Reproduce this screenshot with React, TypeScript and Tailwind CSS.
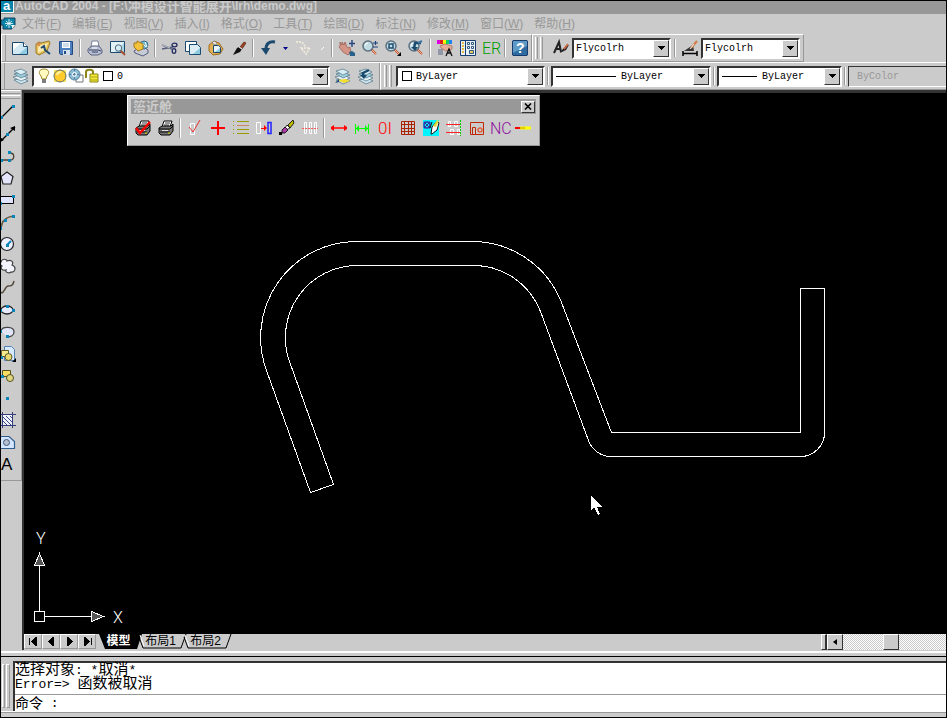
import React from 'react';
import type { ReactNode } from 'react';

const NAVY = '#1b4a6e';

function Icon({ children }: { children: ReactNode }) {
  return (
    <svg width="16" height="16" viewBox="0 0 16 16" fill="none" className="shrink-0 overflow-visible" aria-hidden="true">
      {children}
    </svg>
  );
}

const printer = (
  <>
    <path d="M4 7 5 1h6l1 6z" fill="#fff" stroke="#777f9c" />
    <path d="M1 9l4-3h7l3 4v3l-4 2H4l-3-3z" fill="#b9bfd0" stroke="#5a6384" />
    <path d="M2 10h9l3 1M5 12h6" stroke="#39456b" />
    <path d="M5 8h5" stroke="#fff" />
  </>
);

const lens = (
  <>
    <path d="M9 9l5 5" stroke="#c2512c" strokeWidth="2" />
    <path d="M9 9l5 5" stroke="#e9b08c" strokeWidth="1" />
    <circle cx="6" cy="6" r="5" fill="#c2dce4" stroke="#5c7080" strokeWidth="1.5" />
    <path d="M3 6a3 3 0 0 1 3-3" stroke="#fff" />
  </>
);

const page = (
  <>
    <path d="M.5 2.500h11l4 4v8H.5z" fill="#fff" stroke={NAVY} />
    <path d="M1 14V10l8-7h2l4 4v7z" fill="#d2e8f3" />
    <path d="M7 14l8-7v7z" fill="#8fcbe0" />
    <path d="M11.500 2.500v4h4" stroke={NAVY} fill="#fff" />
  </>
);

const sheets = (
  <>
    <path d="M1 12l8-2 6 3-7 3z" fill="#cfe6ee" stroke="#4f7387" strokeWidth=".7" />
    <path d="M0 9l8-2 7 3-7 3z" fill="#e8f4f8" stroke="#4f7387" strokeWidth=".7" />
    <path d="M1 6l7-2 7 3-7 3z" fill="#9fcfde" stroke="#4f7387" strokeWidth=".7" />
    <path d="M1 3l7-2 6 3-6 3z" fill="#d8eef4" stroke="#4f7387" strokeWidth=".7" />
  </>
);

const blackPrinter = (
  <>
    <path d="M4 7l2-6h8l-2 6z" fill="#fff" stroke="#000" />
    <path d="M7 3h5M6 5h5" stroke="#000" strokeWidth=".8" />
    <path d="M1 8l3-2h9l2-2v7l-3 4H3l-2-2z" fill="#777" stroke="#000" />
    <path d="M1 9h11l3-3M2 12h10" stroke="#000" />
    <path d="M4 10.500h6" stroke="#ddd" />
    <path d="M10 13h2" stroke="#dddd00" />
  </>
);

const standardGroups: { label: string; icon: ReactNode }[][] = [
  [
    { label: '新建', icon: page },
    {
      label: '打开',
      icon: (
        <>
          <path d="M1 4l3-2 2 1 8-2 1 2-3 8-8 4-3-2z" fill="#e4c255" stroke="#9c7a28" />
          <path d="M3 6l10-3-3 7-7 3z" fill="#f8eab2" />
          <path d="M6 8l3-2 1 4 5 4" stroke={NAVY} strokeWidth="2" />
          <path d="M1 3h5l-2 4z" fill="#d98b50" />
        </>
      ),
    },
    {
      label: '保存',
      icon: (
        <>
          <path d="M1.500 1.500h13v13h-12l-1-1z" fill="#4c7fbd" stroke="#234a85" />
          <path d="M4 2h8v6H4z" fill="#fff" />
          <path d="M5 4h6M5 6h6" stroke="#9db6d3" />
          <path d="M5 10h7v5H5z" fill="#d5dfe9" />
          <path d="M6 11h2v3H6z" fill="#234a85" />
        </>
      ),
    },
  ],
  [
    { label: '打印', icon: printer },
    {
      label: '打印预览',
      icon: (
        <>
          <path d="M.5 1.500h14v11H.5z" fill="#e2f1f6" stroke={NAVY} />
          <path d="M5 12l9-9v9z" fill="#a8d6e4" />
          <path d="M10 10l5 5" stroke="#a85236" strokeWidth="2" />
          <circle cx="8.500" cy="8" r="3.200" fill="#d7edf4" stroke="#52697e" />
        </>
      ),
    },
    {
      label: '发布',
      icon: (
        <>
          <path d="M1 11l5-3h6l3 2v3l-5 3-8-3z" fill="#c7cbd8" stroke="#555d7d" />
          <circle cx="11" cy="5" r="4" fill="#67b4d1" stroke="#41708a" />
          <path d="M9 3l4 4M12 2l2 5" stroke="#fff" />
          <path d="M1 3h3V1l6 3v5l-5 2-4-4z" fill="#f2c23c" stroke="#a37718" />
        </>
      ),
    },
  ],
  [
    {
      label: '剪切',
      icon: (
        <>
          <path d="M0 5l10 4M0 9l11-2" stroke="#566078" strokeWidth="1.500" />
          <path d="M0 5l8 3" stroke="#e8ebf0" strokeWidth=".7" />
          <ellipse cx="12.500" cy="5" rx="2.500" ry="1.800" stroke="#232d63" strokeWidth="1.300" />
          <ellipse cx="12" cy="11" rx="1.800" ry="2.300" stroke="#232d63" strokeWidth="1.300" />
        </>
      ),
    },
    {
      label: '复制',
      icon: (
        <>
          <path d="M.5 1.500h11v10H.5z" fill="#fff" stroke={NAVY} />
          <path d="M4.500 4.500h8l3 3v7h-11z" fill="#dceef5" stroke={NAVY} />
          <path d="M8 14l7-6v6z" fill="#8fcbe0" />
        </>
      ),
    },
    {
      label: '粘贴',
      icon: (
        <>
          <path d="M1 5l5-4 5 2 4 6-3 5-7 1-4-4z" fill="#dfae55" stroke="#a06d1c" />
          <path d="M4 3l2-2 3 2-1 2z" fill="#eee" stroke="#777" strokeWidth=".7" />
          <path d="M5.500 5.500h5l2 2v5h-7z" fill="#e8f5fa" stroke={NAVY} />
          <path d="M7 12l5-4v4z" fill="#8fcbe0" />
        </>
      ),
    },
    {
      label: '特性匹配',
      icon: (
        <>
          <path d="M9 7l4-5 2 1-4 6z" fill="#9b4426" stroke="#55200f" strokeWidth=".7" />
          <path d="M6 8l2-1 3 2-2 3-7 3z" fill="#111" />
          <path d="M8 7l3 2" stroke="#ddd" strokeWidth="1.200" />
        </>
      ),
    },
  ],
];

const viewGroups: { label: string; icon: ReactNode }[][] = [
  [
    {
      label: '实时平移',
      icon: (
        <>
          <path d="M1 2l2 3V2l2 3 1-3 2 5 1 1 2-1 1 5-3 3-5-3-4-5 1-1z" fill="#d49486" stroke="#96574c" strokeWidth=".7" />
          <path d="M10 12l3-1 3 2v3h-5z" fill="#28618a" />
          <path d="M13 0v7M10 3.500h6" stroke="#27457e" strokeWidth="1.400" />
        </>
      ),
    },
    {
      label: '实时缩放',
      icon: (
        <>
          {lens}
          <path d="M11 3h5M13.500 1v4M11 7h5" stroke="#1c447d" strokeWidth="1.200" />
        </>
      ),
    },
    {
      label: '窗口缩放',
      icon: (
        <>
          {lens}
          <path d="M4 4h4v4H4z" stroke={NAVY} strokeWidth="1.500" />
          <path d="M16 12v4h-4z" fill="#000" />
        </>
      ),
    },
    {
      label: '缩放上一个',
      icon: (
        <>
          {lens}
          <path d="M6 9l1-6h6" stroke={NAVY} strokeWidth="2.500" />
          <path d="M3 7h7L7 11z" fill={NAVY} />
          <path d="M10 3l4-2" stroke="#4177a3" strokeWidth="2" />
        </>
      ),
    },
  ],
  [
    {
      label: '特性',
      icon: (
        <>
          <path d="M0 0h4v4H0z" fill="#e000e0" />
          <path d="M3 0h3v4H3z" fill="#e02020" />
          <path d="M6 0h3v4H6z" fill="#f5f500" />
          <path d="M9 0h3v4H9z" fill="#10d060" />
          <path d="M12 0h3v4h-3z" fill="#2080f0" />
          <path d="M3 6l5-2 7 2v3l-6 2-5-3z" fill="#e8ad99" stroke="#a16352" strokeWidth=".7" />
          <path d="M1 10h5M1 12h5M1 14h5" stroke="#5b6682" strokeWidth="1.200" />
          <path d="M9 16l3-7 3 7M10 13h4" stroke="#111" strokeWidth="1.300" />
        </>
      ),
    },
    {
      label: '设计中心',
      icon: (
        <>
          <path d="M.5.5h15v15H.5z" fill="#e8f1f7" stroke="#173d70" />
          <path d="M5.500 1v14" stroke="#173d70" />
          <path d="M3 2v12" stroke="#e5bb41" strokeWidth="2" strokeDasharray="2 1" />
          <path d="M7.500 2.500h2v2h-2zM11.500 2.500h2v2h-2zM7.500 6.500h2v2h-2zM11.500 6.500h2v2h-2z" fill="#fff" stroke="#31577f" />
          <path d="M9.500 10.500h4v3h-4z" fill="#ebcf62" stroke="#31577f" />
        </>
      ),
    },
    {
      label: 'ER',
      icon: (
        <text x="-1" y="14" fontSize="16" fontWeight="300" fontFamily="Roboto, sans-serif" fill="#009c00">
          ER
        </text>
      ),
    },
  ],
  [
    {
      label: '帮助',
      icon: (
        <>
          <path d="M1 .5h14l.5.5v14l-.5.5H1l-.5-.5V1z" fill="#2d6ba1" stroke="#173d70" />
          <path d="M1 1h14v5L1 13z" fill="#5f9bc5" />
          <text x="4" y="13" fontSize="14" fontWeight="700" fontFamily="Liberation Sans, sans-serif" fill="#fff">
            ?
          </text>
        </>
      ),
    },
  ],
];

const pluginGroups: { label: string; icon: ReactNode }[][] = [
  [
    {
      label: '打印检查',
      icon: (
        <>
          {blackPrinter}
          <path d="M1 8l4 5L15 2" stroke="#f00" strokeWidth="2.500" />
        </>
      ),
    },
    { label: '打印', icon: blackPrinter },
  ],
  [
    {
      label: '检查',
      icon: (
        <>
          <path d="M3.500 3.500h4v11h-4z" stroke="#fff" />
          <path d="M2 7l4 5 7-12" stroke="#e83030" />
        </>
      ),
    },
    { label: '添加', icon: <path d="M8 1v14M1 8h14" stroke="#f00" strokeWidth="2" /> },
    {
      label: '列表',
      icon: (
        <>
          <path d="M4 1.500h12M4 9.500h12M4 13.500h12" stroke="#999900" />
          <path d="M4 5.500h12" stroke="#cc8866" />
          <path d="M.5 1v14" stroke="#999900" strokeDasharray="1 3" />
        </>
      ),
    },
    {
      label: '移动',
      icon: (
        <>
          <path d="M.5 2.500h4v11h-4z" stroke="#fff" />
          <path d="M12 2.500h3v11h-3z" stroke="#2222ff" strokeWidth="1.500" />
          <path d="M5 8h3V5l3 3-3 3V9H5z" fill="#f00" />
        </>
      ),
    },
    {
      label: '清除',
      icon: (
        <>
          <path d="M0 12h3v3H0z" fill="#000" />
          <path d="M9 5l5-5 1 3-4 5z" fill="#bcbc00" stroke="#000" strokeWidth=".8" />
          <path d="M8 5l3 3-4 2-1-2z" fill="#fff" stroke="#000" strokeWidth=".8" />
          <path d="M3 10l3-3 3 3-3 3H3z" fill="#a83ba8" stroke="#000" strokeWidth=".8" />
        </>
      ),
    },
    {
      label: '折弯',
      icon: (
        <>
          <path d="M2.500 2.500h2v11h-2zM7.500 2.500h2v11h-2zM12.500 2.500h2v11h-2z" stroke="#fff" />
          <path d="M0 8.500h16" stroke="#f55" strokeDasharray="2 1" />
        </>
      ),
    },
  ],
  [
    {
      label: '长度',
      icon: (
        <>
          <path d="M1 8h14" stroke="#f33" strokeWidth="2" />
          <path d="M0 7l3-2v6L0 9zM16 7l-3-2v6l3-2z" fill="#f00" />
        </>
      ),
    },
    {
      label: '标注',
      icon: (
        <>
          <path d="M1.500 4v10M14.500 4v10M2 8.500h12" stroke="#0f0" />
          <path d="M5 5L2 8.500 5 12zM11 5l3 3.500-3 3.500z" fill="#0f0" />
        </>
      ),
    },
    {
      label: 'OI',
      icon: (
        <text x="1" y="14" fontSize="17" fontWeight="300" fontFamily="Roboto, sans-serif" fill="#f00">
          0I
        </text>
      ),
    },
    {
      label: '网格',
      icon: <path d="M1.500 1.500h13v13h-13zM1 4.500h14M1 8.500h14M1 11.500h14M4.500 1v14M8.500 1v14M11.500 1v14" stroke="#aa2200" />,
    },
    {
      label: '编辑',
      icon: (
        <>
          <path d="M0 0h16v16H0z" fill="#00f5ff" />
          <path d="M1 2h6v6H1zM1 2l6 6M7 2L1 8" stroke="#3430a8" />
          <circle cx="4" cy="5" r="3" stroke="#3430a8" />
          <path d="M8 14l1-7 5-6 2 2-2 7-5 4z" fill="#fff" stroke="#111" />
          <path d="M10 6l4-6 2 1-3 6z" fill="#dddd44" />
          <path d="M7 8l2-6" stroke="#111" />
        </>
      ),
    },
    {
      label: '排样',
      icon: (
        <>
          <path d="M2.500 1.500h2v5h-2zM8.500 1.500h3v5h-3zM4.500 9.500h3v5h-3zM11.500 9.500h2v5h-2z" stroke="#fff" />
          <path d="M0 4.500h15M0 12.500h15" stroke="#f22" />
          <path d="M14.500 0v16" stroke="#0c0" strokeDasharray="2 1" />
        </>
      ),
    },
    {
      label: '模具',
      icon: (
        <>
          <path d="M1.500 2.500h13v12h-13z" stroke="#c02800" />
          <path d="M3.500 14V7.500h3V14" stroke="#c02800" />
          <circle cx="11" cy="10" r="2" stroke="#e06040" strokeWidth="1.500" />
        </>
      ),
    },
    {
      label: 'NC',
      icon: (
        <text x="-2" y="14" fontSize="16" fontWeight="300" fontFamily="Roboto, sans-serif" fill="#8f109f">
          NC
        </text>
      ),
    },
    {
      label: '线段',
      icon: (
        <>
          <path d="M0 8h6" stroke="#f00" strokeWidth="2" />
          <path d="M5 8h11" stroke="#ff0" strokeWidth="3" />
          <path d="M5 8h5" stroke="#d09000" />
        </>
      ),
    },
  ],
];

const node = '#0784b8';

const drawTools: { label: string; icon: ReactNode }[] = [
  {
    label: '直线',
    icon: (
      <>
        <path d="M2 13L13 2" stroke="#000" strokeWidth="1.300" />
        <path d="M0 12h3v3H0zM12 1h3v3h-3z" fill={node} />
      </>
    ),
  },
  {
    label: '构造线',
    icon: (
      <>
        <path d="M1 15L15 1" stroke="#000" strokeWidth="1.300" />
        <path d="M15 0v5l-5-3zM0 11l4 3-4 2z" fill="#000" />
        <path d="M6 7h3v3H6z" fill={node} />
      </>
    ),
  },
  {
    label: '多段线',
    icon: (
      <>
        <path d="M1 12h9c5 0 5-7 0-7" stroke="#4a4134" strokeWidth="1.300" />
        <path d="M0 11h3v3H0zM8 11h3v3H8zM8 3h3v3H8z" fill={node} />
      </>
    ),
  },
  { label: '正多边形', icon: <path d="M7 2l6 4.500L11 14H3L1 6.500z" fill="#e4e4fa" stroke="#222" strokeWidth="1.200" /> },
  {
    label: '矩形',
    icon: (
      <>
        <path d="M.5 4.500h13v7H.5z" fill="#e0e4ff" stroke="#000" />
        <path d="M12 3h3v3h-3zM0 10h2v3H0z" fill={node} />
      </>
    ),
  },
  {
    label: '圆弧',
    icon: (
      <>
        <path d="M1 14Q2 3 14 2" stroke="#665d47" strokeWidth="1.500" />
        <path d="M12 1h3v3h-3zM4 5h3v3H4zM0 13h2v3H0z" fill={node} />
      </>
    ),
  },
  {
    label: '圆',
    icon: (
      <>
        <circle cx="7" cy="8" r="6.500" fill="#edf0ff" stroke="#222" strokeWidth="1.200" />
        <path d="M7 9l4-4" stroke={node} strokeWidth="2" />
        <path d="M6 8h3v3H6z" fill={node} />
      </>
    ),
  },
  {
    label: '修订云线',
    icon: <path d="M1 4c1-4 6-3 6-1 4-2 7 1 5 4 5 2 3 8-1 7-2 2-6 0-5-2-4 1-6-2-4-4-2-1-2-3-1-4z" fill="#f4f4ff" stroke="#444" strokeWidth="1.200" />,
  },
  { label: '样条曲线', icon: <path d="M0 11c3 6 5-5 8-5s5 0 6-5" stroke="#53493b" strokeWidth="1.500" /> },
  {
    label: '椭圆',
    icon: (
      <>
        <ellipse cx="7" cy="8" rx="6" ry="4" fill="#e5eaff" stroke="#222" strokeWidth="1.300" />
        <path d="M0 7h2v3H0zM12 7h3v3h-3zM6 3h3v3H6z" fill={node} />
      </>
    ),
  },
  {
    label: '椭圆弧',
    icon: (
      <>
        <path d="M1 7c1-5 13-5 13 1 0 3-3 5-7 5" fill="#dfe4f6" stroke="#444" strokeWidth="1.300" />
        <path d="M0 6h2v3H0zM6 11h3v3H6z" fill={node} />
      </>
    ),
  },
  {
    label: '插入块',
    icon: (
      <>
        <path d="M4.500.5h7l3 3v11h-10z" fill="#d8e8ff" stroke="#5582b5" />
        <path d="M1.500 4.500h7v6h-7z" fill="#f4e98b" stroke="#5c5728" />
        <circle cx="8.500" cy="11" r="3.500" fill="#e5d96f" stroke="#5c5728" />
        <path d="M16 12v4h-4z" fill="#000" />
        <path d="M0 10h3v3H0z" fill={node} />
      </>
    ),
  },
  {
    label: '创建块',
    icon: (
      <>
        <path d="M2.500 2.500h8v6h-8z" fill="#f8dd63" stroke="#55511f" />
        <circle cx="10" cy="10" r="3.500" fill="#e0d680" stroke="#55511f" />
        <path d="M1 7h3v3H1z" fill={node} />
      </>
    ),
  },
  { label: '点', icon: <path d="M6 7h3v3H6z" fill={node} /> },
  {
    label: '图案填充',
    icon: (
      <>
        <path d="M3 3h10v10H3z" fill="#f3f4ff" />
        <path d="M3 5l8 8M3 9l4 4M6 4l7 7M10 4l3 3" stroke="#394687" />
        <path d="M2.500 0v16M12.500 0v16M0 2.500h16M0 13.500h16" stroke="#323c76" />
      </>
    ),
  },
  {
    label: '面域',
    icon: (
      <>
        <path d="M0 2.500h9l5.500 5v7H0z" fill="#d4e6ff" stroke="#315c8e" strokeWidth="1.200" />
        <circle cx="6.500" cy="8.500" r="3" fill="#b5bfcf" stroke="#3f5879" />
      </>
    ),
  },
  {
    label: '多行文字',
    icon: (
      <text x="1" y="14" fontSize="17" fontFamily="Liberation Sans, sans-serif" fill="#000">
        A
      </text>
    ),
  },
];

const menus = [
  ['文件', 'F'],
  ['编辑', 'E'],
  ['视图', 'V'],
  ['插入', 'I'],
  ['格式', 'O'],
  ['工具', 'T'],
  ['绘图', 'D'],
  ['标注', 'N'],
  ['修改', 'M'],
  ['窗口', 'W'],
  ['帮助', 'H'],
];

function ToolButton({ label, children }: { label: string; children: ReactNode }) {
  return (
    <button type="button" aria-label={label} className="flex h-[22px] w-[23px] shrink-0 items-center justify-center">
      <Icon>{children}</Icon>
    </button>
  );
}

function Separator() {
  return (
    <div className="flex w-[6px] shrink-0 justify-center self-stretch py-1">
      <div className="w-[2px] border-l border-[#989898] bg-white" />
    </div>
  );
}

function Grip() {
  return (
    <div className="flex shrink-0 gap-[2px] self-stretch py-[2px]">
      <div className="w-[3px] border-l border-r border-l-white border-r-[#989898]" />
      <div className="w-[3px] border-l border-r border-l-white border-r-[#989898]" />
    </div>
  );
}

function ButtonGroups({ groups }: { groups: { label: string; icon: ReactNode }[][] }) {
  return (
    <>
      {groups.map((group, i) => (
        <React.Fragment key={i}>
          {i > 0 && <Separator />}
          {group.map((tool) => (
            <ToolButton key={tool.label} label={tool.label}>
              {tool.icon}
            </ToolButton>
          ))}
        </React.Fragment>
      ))}
    </>
  );
}

function Combo({ label, value, width, children }: { label: string; value: string; width: string; children?: ReactNode }) {
  return (
    <div
      className={`relative flex h-[21px] shrink-0 items-center border-2 border-t-[#333] border-l-[#333] border-r-white border-b-white bg-white ${width}`}
    >
      {children}
      <select
        aria-label={label}
        className="h-full min-w-0 flex-1 appearance-none bg-transparent pt-[1px] pl-[2px] font-['Liberation_Mono',monospace] text-[10px] text-black outline-none"
      >
        <option>{value}</option>
      </select>
      <span className="pointer-events-none flex h-[17px] w-4 shrink-0 items-center justify-center border border-t-white border-l-white border-r-[#333] border-b-[#333] bg-[#cbcbcb]">
        <svg width="7" height="4" viewBox="0 0 7 4" shapeRendering="crispEdges">
          <path d="M0 0h7L3.500 4z" fill="#000" />
        </svg>
      </span>
    </div>
  );
}

function PluginToolbar() {
  return (
    <section className="absolute top-[2px] left-[103px] border border-t-white border-l-white border-r-[#989898] border-b-[#989898] bg-[#cbcbcb] p-[3px]">
      <header className="flex h-[15px] items-center justify-between bg-[#989898] pr-[1px] pl-[2px]">
        <h2 className="text-[13px] leading-[15px] font-bold text-[#cbcbcb]">箈近舱</h2>
        <button
          type="button"
          aria-label="关闭"
          className="flex h-3 w-[14px] items-center justify-center border border-t-white border-l-white border-r-[#333] border-b-[#333] bg-[#cbcbcb]"
        >
          <svg width="8" height="7" viewBox="0 0 8 7">
            <path d="M1 0.500l6 6M7 0.500l-6 6" stroke="#000" strokeWidth="1.600" />
          </svg>
        </button>
      </header>
      <div className="flex h-[28px] items-center pr-[2px]">
        <ButtonGroups groups={pluginGroups} />
      </div>
    </section>
  );
}

function Drawing() {
  return (
    <svg className="absolute inset-0 h-full w-full" shapeRendering="crispEdges" aria-label="图形">
      <g transform="translate(-23.500 -92.500)" fill="none" stroke="#fff">
        <path d="M310 492L266 370A96 96 0 0 1 356 241H472A96 96 0 0 1 561 302L611 432H800V288H824V432A24 24 0 0 1 800 456H611A24 24 0 0 1 588 440L540 311A72 72 0 0 0 472 265H356A72 72 0 0 0 289 361L333 484Z" />
        <path d="M590.500 494.500v15l3-3 4 8 2-1-3-7h5z" fill="#fff" stroke="none" />
      </g>
    </svg>
  );
}

function UcsIcon() {
  return (
    <svg width="120" height="110" className="absolute bottom-0 left-0" shapeRendering="crispEdges" aria-label="UCS">
      <g fill="none" stroke="#fff">
        <path d="M10.500 87.500h10v10h-10zM15.500 87V39M21 92.500h47" />
        <path d="M10.500 41.500l5-12 5 12zM67.500 87.500l12 5-12 5z" fill="#555" />
      </g>
      <g fill="#fff" fontSize="16" fontWeight="300" fontFamily="Roboto, sans-serif">
        <text x="12" y="20">
          Y
        </text>
        <text x="89" y="99">
          X
        </text>
      </g>
    </svg>
  );
}

function LayoutBar() {
  const arrows = ['M4 3v8M12 2v10L6 7z', 'M11 2v10L5 7z', 'M6 2v10l6-5z', 'M5 2v10l6-5zM13 3v8'];
  return (
    <div className="flex h-4 shrink-0 bg-[#cbcbcb] text-[12px] leading-[15px]">
      {arrows.map((d, i) => (
        <button
          key={d}
          type="button"
          aria-label={['第一个', '上一个', '下一个', '最后一个'][i]}
          className="flex h-[15px] w-[18px] items-center border border-t-white border-l-white border-r-[#989898] border-b-[#989898]"
        >
          <svg width="16" height="13" viewBox="0 0 16 14" shapeRendering="crispEdges">
            <path d={d} fill="#000" stroke="#000" strokeWidth="1" />
          </svg>
        </button>
      ))}
      <div className="flex pl-[3px]">
        <button type="button" className="relative h-[15px] w-[39px] font-bold text-white">
          <svg width="46" height="15" className="absolute top-0 left-0">
            <path d="M0 0h43l-5 15H6z" fill="#000" />
          </svg>
          <span className="relative">模型</span>
        </button>
        {['布局1', '布局2'].map((name) => (
          <button key={name} type="button" className="relative h-[15px] w-[45px]">
            <svg width="52" height="15" className="absolute top-0 left-0" fill="none" stroke="#000">
              <path d="M1 3l4 11h38l5-14" />
              <path d="M2 1l4 11" stroke="#fff" />
            </svg>
            <span className="relative">{name}</span>
          </button>
        ))}
      </div>
      <div className="flex-1" />
      <div className="w-[6px] border border-r-2 border-t-white border-l-white border-r-[#333] border-b-[#333]" />
      <button
        type="button"
        aria-label="向左滚动"
        className="flex w-4 items-center justify-center border border-t-white border-l-white border-r-[#333] border-b-[#333]"
      >
        <svg width="4" height="6" viewBox="0 0 4 6">
          <path d="M4 0v6L0 3z" fill="#000" />
        </svg>
      </button>
      <div className="w-[103px] bg-[repeating-conic-gradient(#cbcbcb_0_25%,#fff_0_50%)] bg-[length:2px_2px] pl-10">
        <div className="h-4 w-4 border border-t-white border-l-white border-r-[#333] border-b-[#333] bg-[#cbcbcb]" />
      </div>
    </div>
  );
}

function CommandWindow() {
  return (
    <section className="flex h-[50px] shrink-0 pl-[1px]">
      <div className="flex w-[11px] gap-[1px] pt-[3px] pb-[3px]">
        <div className="w-[3px] border border-t-white border-l-white border-r-[#989898] border-b-[#989898]" />
        <div className="w-[4px] border border-t-white border-l-white border-r-[#989898] border-b-[#989898]" />
      </div>
      <div className="flex flex-1 flex-col border-t-2 border-l-2 border-[#333] bg-white font-['Liberation_Mono','Noto_Sans_CJK_SC',monospace] text-[13px] text-black">
        <div className="h-8 border-b border-[#989898] pt-[1px] leading-[14px]">
          <p className="flex h-[14px] whitespace-pre">
            <span className="text-[15px]">选择对象</span>: *<span className="text-[15px]">取消</span>*
          </p>
          <p className="flex h-[14px] whitespace-pre">
            Error=&gt; <span className="text-[15px]">函数被取消</span>
          </p>
        </div>
        <div className="flex h-4 items-center pt-[1px] leading-4">
          <label htmlFor="command" className="flex whitespace-pre">
            <span className="text-[14px]">命令</span> :
          </label>
          <input id="command" className="h-4 min-w-0 flex-1 bg-transparent pl-2 outline-none" />
        </div>
      </div>
    </section>
  );
}

export default function App() {
  return (
    <div className="flex h-screen flex-col overflow-hidden border border-black bg-[#cbcbcb] font-['Liberation_Sans','Noto_Sans_CJK_SC',sans-serif] text-black">
      <header className="flex h-[13px] shrink-0 items-center bg-[#989898]">
        <svg width="14" height="13" viewBox="0 0 14 13" className="shrink-0 overflow-visible" aria-hidden="true">
          <path d="M0 0h12v11H0z" fill="#0784a8" />
          <text x="2" y="9" fontSize="13" fontWeight="700" fontFamily="Liberation Sans, sans-serif" fill="#fff">
            a
          </text>
          <path d="M12.500 0v11.500H0" stroke="#fff" fill="none" />
        </svg>
        <h1 className="flex h-[13px] text-[12px] leading-[11px] font-bold whitespace-pre text-[#cbcbcb]">
          AutoCAD 2004 - [F:\<span className="text-[13px]">冲模设计智能展开</span>\lrh\demo.dwg]
        </h1>
      </header>

      <nav className="flex h-5 shrink-0 items-center gap-[11px]">
        <svg width="16" height="16" viewBox="0 0 16 16" className="-mr-[6px] shrink-0" aria-hidden="true">
          <path d="M0 4h3V2h11v7l-3 4H2V9H0z" fill="#0784a8" stroke="#17425e" />
          <path d="M8 3v9M4 7.500h8M5 5l6 5M11 5l-6 5" stroke="#fff" strokeWidth=".8" />
          <path d="M14 9l-3 4V9z" fill="#fff" />
        </svg>
        {menus.map(([name, key]) => (
          <button key={key} type="button" className="text-[12px] leading-4 whitespace-nowrap text-[#989898]">
            {name}(<u>{key}</u>)
          </button>
        ))}
      </nav>

      <div className="flex h-7 shrink-0">
        <div className="flex items-center border border-t-white border-l-white border-r-[#989898] border-b-[#989898]">
          <div className="mr-[2px] w-[4px] self-stretch border-r border-[#989898]" />
          <ButtonGroups groups={standardGroups} />
          <Separator />
          <ToolButton label="放弃">
            <path d="M15 2C9 1 6 4 6 9" stroke={NAVY} strokeWidth="3" />
            <path d="M1 8h9l-4 7z" fill={NAVY} />
          </ToolButton>
          <button type="button" aria-label="放弃列表" className="flex w-3 items-center justify-center">
            <svg width="5" height="3">
              <path d="M0 0h5L2.500 3z" fill="#00008b" />
            </svg>
          </button>
          <ToolButton label="重做">
            <path d="M1 2c6-1 9 2 9 6M6 8h9l-4 6z" stroke="#f5efdc" strokeWidth="1.500" strokeDasharray="2 1" />
          </ToolButton>
          <button type="button" aria-label="重做列表" className="flex w-[15px] items-center justify-center">
            <svg width="4" height="3">
              <path d="M1 3l3-3" stroke="#fff" />
            </svg>
          </button>
          <Separator />
          <ButtonGroups groups={viewGroups} />
        </div>
        <div className="flex items-center border border-t-white border-l-white border-r-[#989898] border-b-[#989898] pr-[3px] pl-[2px]">
          <Grip />
          <div className="w-[6px]" />
          <ToolButton label="文字样式">
            <path d="M1 13L6 2l2 10M3 9h5" stroke="#222" strokeWidth="2" />
            <path d="M8 11l5-5 3-1-3 5-6 3z" fill="#222" />
            <path d="M11 9l4-5" stroke="#c9683f" strokeWidth="2" />
          </ToolButton>
          <Combo label="文字样式控制" value="Flycolrh" width="w-[99px]" />
          <div className="w-[1px]" />
          <Separator />
          <ToolButton label="标注样式">
            <path d="M1 11v5M15 11v5M1 13.500h14" stroke="#000" strokeWidth="1.500" />
            <path d="M2 11l9-6 1 6z" fill="#333" />
            <path d="M9 8l6-7" stroke="#d37b45" strokeWidth="2" />
            <path d="M8 9l4-5" stroke="#eee" />
          </ToolButton>
          <Combo label="标注样式控制" value="Flycolrh" width="w-[99px]" />
        </div>
      </div>

      <div className="flex h-7 shrink-0 border-t border-white">
        <div className="flex items-center border-r border-b border-[#989898] pr-[2px]">
          <div className="mr-[4px] w-[4px] self-stretch border-r border-[#989898]" />
          <ToolButton label="图层特性管理器">{sheets}</ToolButton>
          <Combo label="图层" value="0" width="w-[298px]">
            <span className="flex items-center pl-[2px]">
              <Icon>
                <path d="M8 1c5 0 6 4 3 7l-1 3H6L5 8C2 5 3 1 8 1z" fill="#fffbc0" stroke="#a48a2e" />
                <path d="M6 12h4M6 14h4" stroke="#555" strokeWidth="1.500" />
              </Icon>
              <Icon>
                <path d="M2 2h12v12H2z" fill="#f4e75c" />
                <circle cx="8" cy="8" r="6" fill="#ffcb2d" stroke="#63706b" />
                <path d="M5 7a4 4 0 0 1 4-3" stroke="#fff2a0" strokeWidth="2" />
              </Icon>
              <Icon>
                <path d="M8 7h7v7H8z" fill="#fff" stroke="#777" />
                <circle cx="6.500" cy="6.500" r="5.500" fill="#8fbcd5" stroke="#527d9b" />
                <circle cx="6.500" cy="6.500" r="2" stroke="#fff" />
                <path d="M6.500 1v11M1 6.500h11" stroke="#527d9b" strokeDasharray="2 2" />
              </Icon>
              <Icon>
                <path d="M2 10V4c0-3 7-3 7 0v3" stroke="#8b8615" strokeWidth="2" />
                <path d="M6 6h8v8H6z" fill="#f2ea35" stroke="#8b8615" />
                <path d="M7 9h7M7 12h7" stroke="#aaa31d" />
              </Icon>
              <span className="mr-[2px] ml-[3px] h-[10px] w-[10px] border border-black" />
            </span>
          </Combo>
          <div className="w-[1px]" />
          <ToolButton label="将对象的图层置为当前">
            {sheets}
            <path d="M2 12l9-1 4 2-6 2z" fill="#f4dd2f" />
            <path d="M0 15l4-4v3z" fill="#174a80" />
          </ToolButton>
          <ToolButton label="上一个图层">
            {sheets}
            <path d="M5 8V5l6-3" stroke={NAVY} strokeWidth="2.500" />
            <path d="M2 7h7l-3 4z" fill={NAVY} />
          </ToolButton>
        </div>
        <div className="flex min-w-0 flex-1 items-center border-b border-l border-b-[#989898] border-l-white pl-[3px]">
          <Grip />
          <div className="w-[4px] shrink-0" />
          <Combo label="颜色" value="ByLayer" width="w-[149px]">
            <span className="mr-[2px] ml-[4px] h-[10px] w-[10px] shrink-0 border border-black" />
          </Combo>
          <Separator />
          <Combo label="线型" value="ByLayer" width="w-[160px]">
            <span className="mx-[3px] h-px w-[60px] shrink-0 bg-black" />
          </Combo>
          <Separator />
          <Combo label="线宽" value="ByLayer" width="w-[125px]">
            <span className="mx-[3px] h-px w-[35px] shrink-0 bg-black" />
          </Combo>
          <Separator />
          <select
            aria-label="打印样式"
            disabled
            className="h-[21px] min-w-0 flex-1 appearance-none border border-t-[#333] border-r-0 border-b-white border-l-[#333] bg-[#cbcbcb] pl-2 font-['Liberation_Mono',monospace] text-[10px] text-[#989898] opacity-100"
          >
            <option>ByColor</option>
          </select>
        </div>
      </div>

      <main className="flex min-h-0 flex-1">
        <aside className="w-[21px] shrink-0">
          <div className="-ml-[1px] border-r border-b border-[#989898] pb-[5px]">
            <div className="flex flex-col gap-[1px] pb-[2px]">
              <div className="h-[4px] border border-x-transparent border-t-white border-b-[#989898]" />
              <div className="h-[4px] border border-x-transparent border-t-white border-b-[#989898]" />
            </div>
            {drawTools.map((tool) => (
              <button key={tool.label} type="button" aria-label={tool.label} className="flex h-[22px] items-center">
                <Icon>{tool.icon}</Icon>
              </button>
            ))}
          </div>
        </aside>
        <div className="flex min-w-0 flex-1 flex-col border-t-3 border-l-2 border-[#333]">
          <div className="relative min-h-0 flex-1 overflow-hidden bg-black">
            <Drawing />
            <UcsIcon />
            <PluginToolbar />
          </div>
          <LayoutBar />
        </div>
      </main>

      <div className="mt-[1px] h-[6px] shrink-0 border-t-2 border-b border-t-white border-b-black" />
      <div className="h-[4px] shrink-0" />
      <CommandWindow />
      <footer className="h-[6px] shrink-0 border-t border-white">
        <div className="h-[1px] bg-[#989898]" />
      </footer>
    </div>
  );
}
